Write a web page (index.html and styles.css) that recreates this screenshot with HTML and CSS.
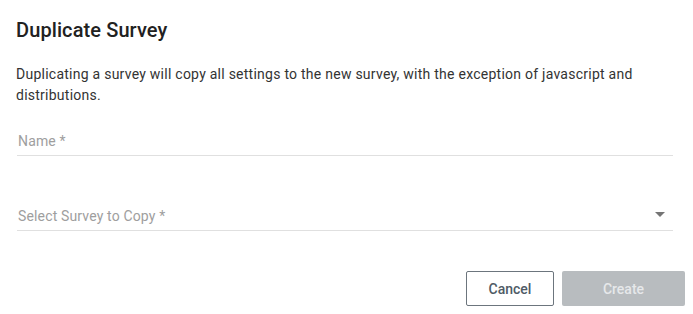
FILE: index.html
```html
<!DOCTYPE html>
<html lang="en">
  <head>
    <meta charset="UTF-8" />
    <meta name="viewport" content="width=device-width, initial-scale=1.0" />
    <title>Duplicate Survey</title>
    <link rel="stylesheet" href="styles.css">
  </head>
  <body>
    <div class="dialog">
      <h2 class="dialog-title">Duplicate Survey</h2>

      <div class="dialog-content">
        <p class="description">
          Duplicating a survey will copy all settings to the new survey, with the exception of javascript and distributions.
        </p>

        <div class="field">
          <input type="text" id="surveyName" placeholder="Name *" />
        </div>

        <div class="field select-field">
          <div class="select-value">Select Survey to Copy *</div>
          <span class="arrow"></span>
        </div>
      </div>

      <div class="dialog-actions">
        <button class="btn btn-outline">Cancel</button>
        <button class="btn btn-primary" disabled>Create</button>
      </div>
    </div>
  </body>
</html>
```

FILE: styles.css
```css
body {
  margin: 0;
  font-family: Roboto, "Liberation Sans", sans-serif;
  background: #fff;
  color: #212121;
}

.dialog {
  width: 693px;
}

.dialog-title {
  margin: 0;
  padding: 18px 16px 0;
  font-size: 20px;
  line-height: 24px;
  font-weight: 500;
  letter-spacing: 0.1px;
  color: #212121;
}

.dialog-content {
  padding: 22px 20px 0 16px;
}

.description {
  margin: 0;
  font-size: 14px;
  line-height: 21px;
  letter-spacing: 0.25px;
  color: #333;
}

.field {
  margin-left: 1px;
  border-bottom: 1px solid #e0e0e0;
  position: relative;
}

.field input {
  display: block;
  width: 100%;
  box-sizing: border-box;
  border: none;
  outline: none;
  padding: 0 0 2px 1px;
  height: 26px;
  font-family: inherit;
  font-size: 14px;
  letter-spacing: 0.15px;
  color: #212121;
  background: transparent;
  margin-top: 23px;
}

.field input::placeholder {
  color: #9e9e9e;
}

.select-field {
  margin-top: 48px;
  height: 26px;
}

.select-value {
  padding-left: 1px;
  font-size: 14px;
  line-height: 24px;
  letter-spacing: 0.15px;
  color: #9e9e9e;
}

.arrow {
  position: absolute;
  right: 8px;
  top: 8px;
  width: 0;
  height: 0;
  border-left: 5px solid transparent;
  border-right: 5px solid transparent;
  border-top: 5px solid #757575;
}

.dialog-actions {
  display: flex;
  justify-content: flex-end;
  gap: 8px;
  padding: 40px 8px 0 0;
}

.btn {
  height: 35px;
  font-family: inherit;
  font-size: 14px;
  font-weight: 500;
  border-radius: 2px;
  cursor: pointer;
}

.btn-outline {
  width: 88px;
  background: #fff;
  border: 1px solid #6c757d;
  color: #4f5b66;
}

.btn-primary {
  width: 123px;
  background: #b8bcbf;
  border: none;
  color: #e6e8ea;
}
```
